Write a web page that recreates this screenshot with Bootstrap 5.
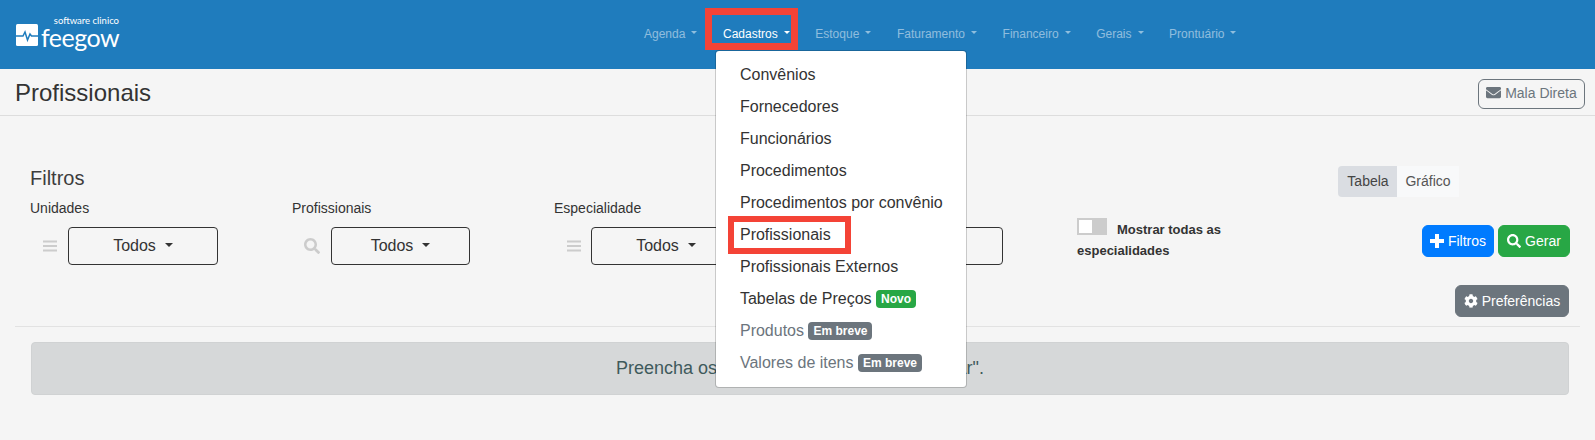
<!DOCTYPE html>
<html lang="pt-BR">
<head>
<meta charset="utf-8">
<title>Profissionais</title>
<link rel="stylesheet" href="https://cdn.jsdelivr.net/npm/bootstrap@5.3.0/dist/css/bootstrap.min.css">
<style>
html,body{height:440px;overflow:hidden}
body{background:#f5f5f5;color:#333;font-family:"Liberation Sans",Arial,sans-serif;font-size:14px}
.topbar{background:#1f7cbd;height:69px;padding:0 0 2px}
.brand-box{width:636px;padding-left:16px;flex:none;align-items:center;padding-top:2px}
.brand-text{margin-left:3px;color:#fff;font-family:Lato,sans-serif;line-height:1;text-align:right;margin-top:-2px;width:78px}
.brand-sub{font-size:9.5px;line-height:8px;white-space:nowrap}
.brand-name{font-size:25px;line-height:25px;letter-spacing:-.5px;white-space:nowrap}
.menu-row{gap:9.6px;flex-direction:row}
.menu-row .nav-link{font-size:12px;padding:8px;color:rgba(255,255,255,.5);line-height:18px}
.menu-row .nav-link.active{color:#fff}
.dropdown-toggle::after{margin-left:6px}
.drop-panel{display:block;top:33px;left:0;margin:0;width:252px;padding:8px 0;font-size:16px;z-index:1000;border-radius:4px}
.menu-row .drop-panel{position:absolute}
.drop-panel .dropdown-item{padding:4px 24px;line-height:24px;color:#333;position:relative}
.drop-panel .dropdown-item.disabled{color:#6c757d}
.drop-panel .badge{font-size:12px;padding:3px 5px;border-radius:4px;vertical-align:1px;line-height:12px}
.badge-new{background:#28a745}
.mark-a{position:absolute;left:-10px;top:-9px;width:93px;height:42px;border:7px solid #f44336;z-index:1100;pointer-events:none}
.cad-item{position:relative}
.mark-b{position:absolute;left:12px;top:-3px;width:123px;height:38px;border:6px solid #f44336;pointer-events:none}
.page-head{height:47px;padding:0 10px 0 15px;border-bottom:1px solid #ddd}
.page-head h1{font-size:24px;margin:0;font-weight:400;color:#333;line-height:48px}
.mail-btn{font-size:14px;padding:3px 0;width:107px;height:30px;line-height:21px;color:#6c757d;border-color:#6c757d;margin-top:10px}
.ico{width:14px;height:14px;fill:currentColor;vertical-align:-2px}
.ico-mail{width:15px;height:15px}
.filter-top{padding:50px 136px 0 30px;height:82px}
.filter-top h2{font-size:20px;line-height:24px;margin:0;font-weight:400;color:#3d3d3d}
.view-switch .btn{font-size:14px;padding:5px 8px;line-height:21px;border:0;border-radius:0;color:#444;height:31px}
.view-on{background:#dadde2;width:60px;border-top-left-radius:4px!important;border-bottom-left-radius:4px!important}
.view-off{background:#f8f9fa;width:62px;color:#555!important}
.filter-row{padding-left:15px;height:67px}
.filter-col{width:262px;padding-left:15px;flex:none}
.filter-col label{display:block;font-size:14px;line-height:21px;margin-bottom:8px;color:#333}
.pick-ico{width:38px;flex:none;color:#ccc;padding-left:12px;display:flex;align-items:center}
.pick-wide{width:39px}
.pick-narrow{width:37px}
.pick-ico svg{width:16px;height:16px;fill:currentColor}
.pick-btn{height:38px;font-size:16px;color:#333;border:1px solid #333;border-radius:4px;padding:0;background:transparent}
.pick-btn.dropdown-toggle::after{margin-left:9px}
.w-a{width:150px}.w-b{width:139px}.w-c{width:150px}.w-d{width:149px}
.toggle-col{width:359px;padding:20px 0 0 14px;flex:none;font-size:13px;font-weight:700;line-height:21px;color:#333}
.toggle-txt{width:190px}
.fake-switch{display:inline-block;width:30px;height:17px;background:#ccc;padding:2px;margin-right:10px;vertical-align:-1px}
.fake-switch i{display:block;width:13px;height:13px;background:#fff}
.action-box{padding:27px 0 0 0;gap:4px;width:148px;flex:none}
.act-btn{font-size:14px;padding:0 6px;height:32px;line-height:30px;white-space:nowrap;color:#fff!important}
.act-f{width:72px;background:#007bff;border-color:#007bff}
.act-g{width:72px;background:#28a745;border-color:#28a745}
.pref-row{padding:20px 26px 0 0}
.act-p{width:114px;background:#6c757d;border-color:#6c757d}
.sep{margin:9px 15px 15px;border:0;border-top:1px solid #e2e2e2;opacity:1}
.notice{margin:0 26px 0 31px;padding:12px;font-size:18px;line-height:27px;text-align:center;background:#d6d8d9;border:1px solid #d0d2d3;border-radius:4px;color:#3f5a5c}
</style>
</head>
<body>
<nav class="topbar d-flex align-items-center">
  <div class="brand-box d-flex">
    <svg width="22" height="22" viewBox="0 0 22 22"><rect width="22" height="22" rx="1.5" fill="#fff"/><path d="M0 12h7l2-4 2.5 8 2.5-6 1.5 2H22" fill="none" stroke="#1f7cbd" stroke-width="1.5"/></svg>
    <div class="brand-text"><div class="brand-sub">software clinico</div><div class="brand-name">feegow</div></div>
  </div>
  <ul class="navbar-nav menu-row d-flex list-unstyled m-0">
    <li class="nav-item"><a class="nav-link dropdown-toggle" href="#">Agenda</a></li>
    <li class="nav-item cad-item">
      <a class="nav-link dropdown-toggle active" href="#">Cadastros</a>
      <span class="mark-a"></span>
      <div class="dropdown-menu drop-panel show">
        <a class="dropdown-item" href="#">Convênios</a>
        <a class="dropdown-item" href="#">Fornecedores</a>
        <a class="dropdown-item" href="#">Funcionários</a>
        <a class="dropdown-item" href="#">Procedimentos</a>
        <a class="dropdown-item" href="#">Procedimentos por convênio</a>
        <a class="dropdown-item" href="#">Profissionais<span class="mark-b"></span></a>
        <a class="dropdown-item" href="#">Profissionais Externos</a>
        <a class="dropdown-item" href="#">Tabelas de Preços <span class="badge badge-new">Novo</span></a>
        <a class="dropdown-item disabled" href="#">Produtos <span class="badge bg-secondary">Em breve</span></a>
        <a class="dropdown-item disabled" href="#">Valores de itens <span class="badge bg-secondary">Em breve</span></a>
      </div>
    </li>
    <li class="nav-item"><a class="nav-link dropdown-toggle" href="#">Estoque</a></li>
    <li class="nav-item"><a class="nav-link dropdown-toggle" href="#">Faturamento</a></li>
    <li class="nav-item"><a class="nav-link dropdown-toggle" href="#">Financeiro</a></li>
    <li class="nav-item"><a class="nav-link dropdown-toggle" href="#">Gerais</a></li>
    <li class="nav-item"><a class="nav-link dropdown-toggle" href="#">Prontuário</a></li>
  </ul>
</nav>

<header class="page-head d-flex justify-content-between align-items-start">
  <h1>Profissionais</h1>
  <a class="btn mail-btn" href="#"><svg class="ico ico-mail" viewBox="0 0 512 512"><path d="M502.3 190.8c3.9-3.1 9.7-.2 9.7 4.7V400c0 26.5-21.5 48-48 48H48c-26.5 0-48-21.5-48-48V195.6c0-5 5.7-7.8 9.7-4.7 22.4 17.4 52.1 39.5 154.1 113.6 21.1 15.4 56.7 47.8 92.2 47.6 35.7.3 72-32.8 92.3-47.6 102-74.1 131.6-96.3 154-113.7zM256 320c23.2.4 56.6-29.2 73.4-41.4 132.7-96.3 142.8-104.7 173.4-128.7 5.8-4.5 9.2-11.5 9.2-18.9v-19c0-26.5-21.5-48-48-48H48C21.5 64 0 85.5 0 112v19c0 7.4 3.4 14.3 9.2 18.9 30.6 23.9 40.7 32.4 173.4 128.7 16.8 12.2 50.2 41.8 73.4 41.4z"/></svg> Mala Direta</a>
</header>

<section class="filter-top d-flex justify-content-between align-items-start">
  <h2>Filtros</h2>
  <div class="btn-group view-switch"><button class="btn view-on">Tabela</button><button class="btn view-off">Gráfico</button></div>
</section>

<section class="filter-row d-flex">
  <div class="filter-col"><label>Unidades</label><div class="d-flex">
    <span class="pick-ico"><svg viewBox="0 0 16 16"><path d="M1 2.5h14v2H1zM1 7h14v2H1zM1 11.500h14v2H1z"/></svg></span>
    <button class="btn pick-btn dropdown-toggle w-a">Todos</button></div></div>
  <div class="filter-col"><label>Profissionais</label><div class="d-flex">
    <span class="pick-ico pick-wide"><svg viewBox="0 0 512 512"><path d="M505 442.7L405.3 343c-4.5-4.5-10.6-7-17-7H372c27.6-35.3 44-79.7 44-128C416 93.1 322.9 0 208 0S0 93.1 0 208s93.1 208 208 208c48.3 0 92.7-16.4 128-44v16.3c0 6.4 2.5 12.5 7 17l99.7 99.700c9.4 9.4 24.6 9.4 33.900 0l28.300-28.300c9.400-9.400 9.400-24.600.1-34zM208 336c-70.700 0-128-57.200-128-128 0-70.700 57.200-128 128-128 70.700 0 128 57.200 128 128 0 70.700-57.200 128-128 128z"/></svg></span>
    <button class="btn pick-btn dropdown-toggle w-b">Todos</button></div></div>
  <div class="filter-col"><label>Especialidade</label><div class="d-flex">
    <span class="pick-ico pick-narrow"><svg viewBox="0 0 16 16"><path d="M1 2.5h14v2H1zM1 7h14v2H1zM1 11.500h14v2H1z"/></svg></span>
    <button class="btn pick-btn dropdown-toggle w-c">Todos</button></div></div>
  <div class="filter-col"><label>Convênio</label><div class="d-flex">
    <span class="pick-ico"><svg viewBox="0 0 16 16"><path d="M1 2.5h14v2H1zM1 7h14v2H1zM1 11.500h14v2H1z"/></svg></span>
    <button class="btn pick-btn dropdown-toggle w-d">Todos</button></div></div>
  <div class="toggle-col"><div class="toggle-txt"><span class="fake-switch"><i></i></span>Mostrar todas as especialidades</div></div>
  <div class="action-box d-flex align-items-start">
    <a class="btn act-btn act-f" href="#"><svg class="ico" viewBox="0 0 14 14"><path d="M5 0h4v5h5v4H9v5H5V9H0V5h5z"/></svg> Filtros</a>
    <a class="btn act-btn act-g" href="#"><svg class="ico" viewBox="0 0 512 512"><path d="M505 442.7L405.3 343c-4.5-4.5-10.6-7-17-7H372c27.6-35.3 44-79.7 44-128C416 93.1 322.9 0 208 0S0 93.1 0 208s93.1 208 208 208c48.3 0 92.7-16.4 128-44v16.3c0 6.4 2.500 12.500 7 17l99.700 99.700c9.400 9.400 24.600 9.400 33.900 0l28.300-28.300c9.400-9.400 9.400-24.600.1-34zM208 336c-70.700 0-128-57.200-128-128 0-70.700 57.200-128 128-128 70.700 0 128 57.200 128 128 0 70.700-57.200 128-128 128z"/></svg> Gerar</a>
  </div>
</section>

<div class="pref-row d-flex justify-content-end">
  <a class="btn act-btn act-p" href="#"><svg class="ico" viewBox="0 0 512 512"><path d="M487.4 315.7l-42.6-24.6c4.3-23.2 4.3-47 0-70.2l42.6-24.6c4.9-2.8 7.1-8.6 5.500-14-11.100-35.600-30-67.800-54.700-94.600-3.800-4.100-10-5.100-14.800-2.300L380.800 110c-17.900-15.400-38.500-27.300-60.800-35.100V25.800c0-5.600-3.900-10.500-9.400-11.700-36.700-8.200-74.300-7.800-109.200 0-5.500 1.200-9.400 6.100-9.400 11.700V75c-22.200 7.900-42.800 19.800-60.800 35.100L88.700 85.500c-4.900-2.800-11-1.900-14.800 2.300-24.700 26.700-43.600 58.900-54.700 94.600-1.700 5.400.6 11.200 5.500 14L67.300 221c-4.300 23.200-4.300 47 0 70.200l-42.600 24.600c-4.900 2.800-7.100 8.600-5.500 14 11.100 35.600 30 67.800 54.700 94.600 3.800 4.100 10 5.100 14.800 2.300l42.600-24.600c17.900 15.400 38.500 27.300 60.800 35.100v49.200c0 5.600 3.900 10.500 9.400 11.700 36.700 8.200 74.300 7.800 109.200 0 5.500-1.200 9.400-6.100 9.400-11.700v-49.200c22.200-7.900 42.800-19.800 60.800-35.100l42.600 24.600c4.900 2.800 11 1.900 14.800-2.300 24.700-26.700 43.600-58.900 54.700-94.600 1.500-5.500-.7-11.300-5.600-14.100zM256 336c-44.100 0-80-35.900-80-80s35.900-80 80-80 80 35.900 80 80-35.900 80-80 80z"/></svg> Preferências</a>
</div>
<hr class="sep">
<div class="notice">Preencha os filtros acima e clique em "Gerar".</div>
<script src="https://cdn.jsdelivr.net/npm/bootstrap@5.3.0/dist/js/bootstrap.bundle.min.js"></script>
</body>
</html>
